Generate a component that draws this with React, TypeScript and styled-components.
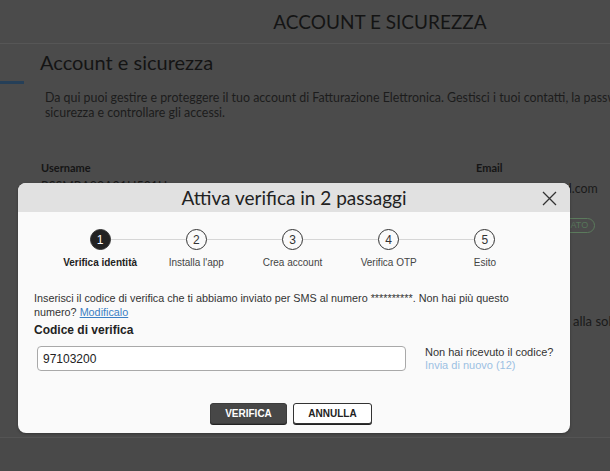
import React from "react";
import styled, { createGlobalStyle } from "styled-components";

const Global = createGlobalStyle`
  html, body { margin: 0; padding: 0; }
  body {
    width: 610px;
    height: 471px;
    overflow: hidden;
    background: #4b4b4b;
    font-family: "Lato", "Liberation Sans", sans-serif;
  }
`;

const Page = styled.div`
  position: relative;
  width: 760px;
  height: 471px;
  overflow: hidden;
  background: #4b4b4b;
  display: flex;
  flex-direction: column;
`;

const TopBar = styled.header`
  height: 43px;
  flex: none;
  border-bottom: 1px solid #565656;
  display: flex;
  align-items: center;
  justify-content: center;
`;

const TopTitle = styled.h1`
  margin: 0;
  font-family: "Lato", sans-serif;
  font-weight: 400;
  font-size: 19px;
  color: #141414;
`;

const Content = styled.main`
  height: 393px;
  flex: none;
  display: flex;
  flex-direction: column;
  border-bottom: 1px solid #545454;
`;

const Footer = styled.footer`
  flex: 1;
  background: #494949;
`;

const SectionHead = styled.div`
  display: grid;
  grid-template-columns: 24px 1fr;
  column-gap: 16px;
  padding-top: 4px;
`;

const AccentBar = styled.div`
  align-self: start;
  margin-top: 33px;
  height: 3px;
  background: #253f58;
`;

const SectionTitle = styled.h2`
  margin: 0;
  font-family: "Lato", sans-serif;
  font-weight: 400;
  font-size: 20px;
  line-height: 28px;
  color: #141414;
`;

const Intro = styled.p`
  margin: 6px 0 0 45px;
  font-size: 12.4px;
  line-height: 15px;
  color: #1c1c1c;
  white-space: nowrap;
`;

const Fields = styled.div`
  display: grid;
  grid-template-columns: 435px 1fr;
  margin: 41px 0 0 41px;
`;

const Field = styled.div`
  display: flex;
  flex-direction: column;
  gap: 5px;
`;

const FieldLabel = styled.div`
  font-size: 11px;
  font-weight: 700;
  color: #151515;
`;

const FieldValue = styled.div<{ $drop?: number }>`
  font-size: 12.4px;
  color: #1a1a1a;
  white-space: nowrap;
  margin-top: ${(p) => p.$drop ?? 0}px;
`;

const Badge = styled.span`
  align-self: flex-start;
  margin-top: 17px;
  margin-left: 52px;
  border: 1px solid #5b7a5c;
  border-radius: 8px;
  padding: 0 6px;
  font-size: 9px;
  line-height: 13px;
  color: #56755a;
  font-family: "Liberation Sans", sans-serif;
`;

const SideNote = styled.div`
  margin: 80px 0 0 573px;
  font-size: 13px;
  color: #1a1a1a;
  white-space: nowrap;
`;

const Modal = styled.div`
  position: absolute;
  left: 18px;
  top: 183px;
  width: 552px;
  height: 250px;
  background: #fafafa;
  border-radius: 8px;
  overflow: hidden;
  display: flex;
  flex-direction: column;
  box-shadow: 0 1px 3px rgba(0, 0, 0, 0.3);
`;

const ModalHeader = styled.div`
  height: 29px;
  flex: none;
  background: #e1e1e1;
  display: flex;
  align-items: center;
  justify-content: center;
  position: relative;
`;

const ModalTitle = styled.h3`
  margin: 0;
  font-family: "Lato", sans-serif;
  font-weight: 400;
  font-size: 19px;
  color: #222;
`;

const CloseButton = styled.button`
  position: absolute;
  right: 13px;
  top: 7px;
  width: 16px;
  height: 16px;
  padding: 0;
  border: 0;
  background: transparent;
  display: flex;
  align-items: center;
  justify-content: center;
`;

const Stepper = styled.ol`
  list-style: none;
  margin: 17px 0 0;
  padding: 0 37px 0 34px;
  display: grid;
  grid-template-columns: repeat(5, 1fr);
`;

const Step = styled.li<{ $first?: boolean; $last?: boolean }>`
  position: relative;
  display: flex;
  flex-direction: column;
  align-items: center;
  gap: 7px;
  &::before {
    content: "";
    position: absolute;
    top: 10px;
    height: 1px;
    background: #d6d6d6;
    left: ${(p) => (p.$first ? "50%" : "0")};
    right: ${(p) => (p.$last ? "50%" : "0")};
  }
`;

const Circle = styled.span<{ $active?: boolean }>`
  position: relative;
  z-index: 1;
  width: 21px;
  height: 21px;
  border-radius: 50%;
  box-sizing: border-box;
  border: 1px solid #333;
  background: ${(p) => (p.$active ? "#222" : "#fafafa")};
  color: ${(p) => (p.$active ? "#fff" : "#333")};
  font-family: "Liberation Sans", sans-serif;
  font-size: 12px;
  display: flex;
  align-items: center;
  justify-content: center;
`;

const StepLabel = styled.span<{ $active?: boolean }>`
  font-family: "Liberation Sans", sans-serif;
  font-size: 10px;
  font-weight: ${(p) => (p.$active ? 700 : 400)};
  color: ${(p) => (p.$active ? "#222" : "#444")};
`;

const Body = styled.div`
  padding: 0 16px;
  margin-top: 23px;
  font-family: "Liberation Sans", sans-serif;
  font-size: 10.8px;
  color: #333;
`;

const Message = styled.p`
  margin: 0;
  line-height: 14px;
`;

const Link = styled.a`
  color: #3b7fc4;
  text-decoration: underline;
`;

const CodeLabel = styled.div`
  margin-top: 4px;
  font-weight: 700;
  font-size: 12px;
  color: #222;
`;

const CodeRow = styled.div`
  display: grid;
  grid-template-columns: 369px 1fr;
  column-gap: 19px;
  margin-top: 9px;
  margin-left: 3px;
`;

const CodeInput = styled.input`
  box-sizing: border-box;
  height: 25px;
  border: 1px solid #a9a9a9;
  border-radius: 4px;
  padding: 0 5px;
  font-family: "Liberation Sans", sans-serif;
  font-size: 12px;
  color: #222;
  background: #fff;
`;

const Resend = styled.div`
  display: flex;
  flex-direction: column;
  font-size: 11px;
  color: #333;
  line-height: 13px;
  white-space: nowrap;
`;

const ResendLink = styled.span`
  color: #9cc1e3;
`;

const Actions = styled.div`
  display: flex;
  justify-content: center;
  gap: 6px;
  margin-top: 31px;
  padding-right: 6px;
`;

const Button = styled.button<{ $primary?: boolean }>`
  box-sizing: border-box;
  width: ${(p) => (p.$primary ? "77px" : "79px")};
  height: 21px;
  border-radius: 3px;
  font-family: "Liberation Sans", sans-serif;
  font-weight: 700;
  font-size: 10px;
  padding: 0;
  cursor: pointer;
  border: 1px solid ${(p) => (p.$primary ? "#3c3c3c" : "#333")};
  background: ${(p) => (p.$primary ? "#474747" : "#fff")};
  color: ${(p) => (p.$primary ? "#fff" : "#222")};
  box-shadow: 0 1px 0 #222;
`;

const steps = ["Verifica identità", "Installa l'app", "Crea account", "Verifica OTP", "Esito"];

export default function App() {
  return (
    <>
      <Global />
      <Page>
        <TopBar>
          <TopTitle>ACCOUNT E SICUREZZA</TopTitle>
        </TopBar>
        <Content>
          <SectionHead>
            <AccentBar />
            <SectionTitle>Account e sicurezza</SectionTitle>
          </SectionHead>
          <Intro>
            Da qui puoi gestire e proteggere il tuo account di Fatturazione Elettronica. Gestisci i tuoi contatti, la password e le impostazioni di
            <br />
            sicurezza e controllare gli accessi.
          </Intro>
          <Fields>
            <Field>
              <FieldLabel>Username</FieldLabel>
              <FieldValue>RSSMRA80A01H501U</FieldValue>
            </Field>
            <Field>
              <FieldLabel>Email</FieldLabel>
              <FieldValue $drop={2}>mrossi@fatturand.com</FieldValue>
              <Badge>VERIFICATO</Badge>
            </Field>
          </Fields>
          <SideNote>alla sola password</SideNote>
        </Content>
        <Footer />

        <Modal role="dialog" aria-label="Attiva verifica in 2 passaggi">
          <ModalHeader>
            <ModalTitle>Attiva verifica in 2 passaggi</ModalTitle>
            <CloseButton aria-label="Chiudi">
              <svg width="15" height="15" viewBox="0 0 15 15">
                <path d="M1 1 L14 14 M14 1 L1 14" stroke="#333" strokeWidth="1.3" />
              </svg>
            </CloseButton>
          </ModalHeader>
          <Stepper>
            {steps.map((s, i) => (
              <Step key={s} $first={i === 0} $last={i === steps.length - 1}>
                <Circle $active={i === 0}>{i + 1}</Circle>
                <StepLabel $active={i === 0}>{s}</StepLabel>
              </Step>
            ))}
          </Stepper>
          <Body>
            <Message>
              Inserisci il codice di verifica che ti abbiamo inviato per SMS al numero **********. Non hai più questo
              <br />
              numero? <Link href="#">Modificalo</Link>
            </Message>
            <CodeLabel>Codice di verifica</CodeLabel>
            <CodeRow>
              <CodeInput defaultValue="97103200" />
              <Resend>
                <span>Non hai ricevuto il codice?</span>
                <ResendLink>Invia di nuovo (12)</ResendLink>
              </Resend>
            </CodeRow>
            <Actions>
              <Button $primary>VERIFICA</Button>
              <Button>ANNULLA</Button>
            </Actions>
          </Body>
        </Modal>
      </Page>
    </>
  );
}
